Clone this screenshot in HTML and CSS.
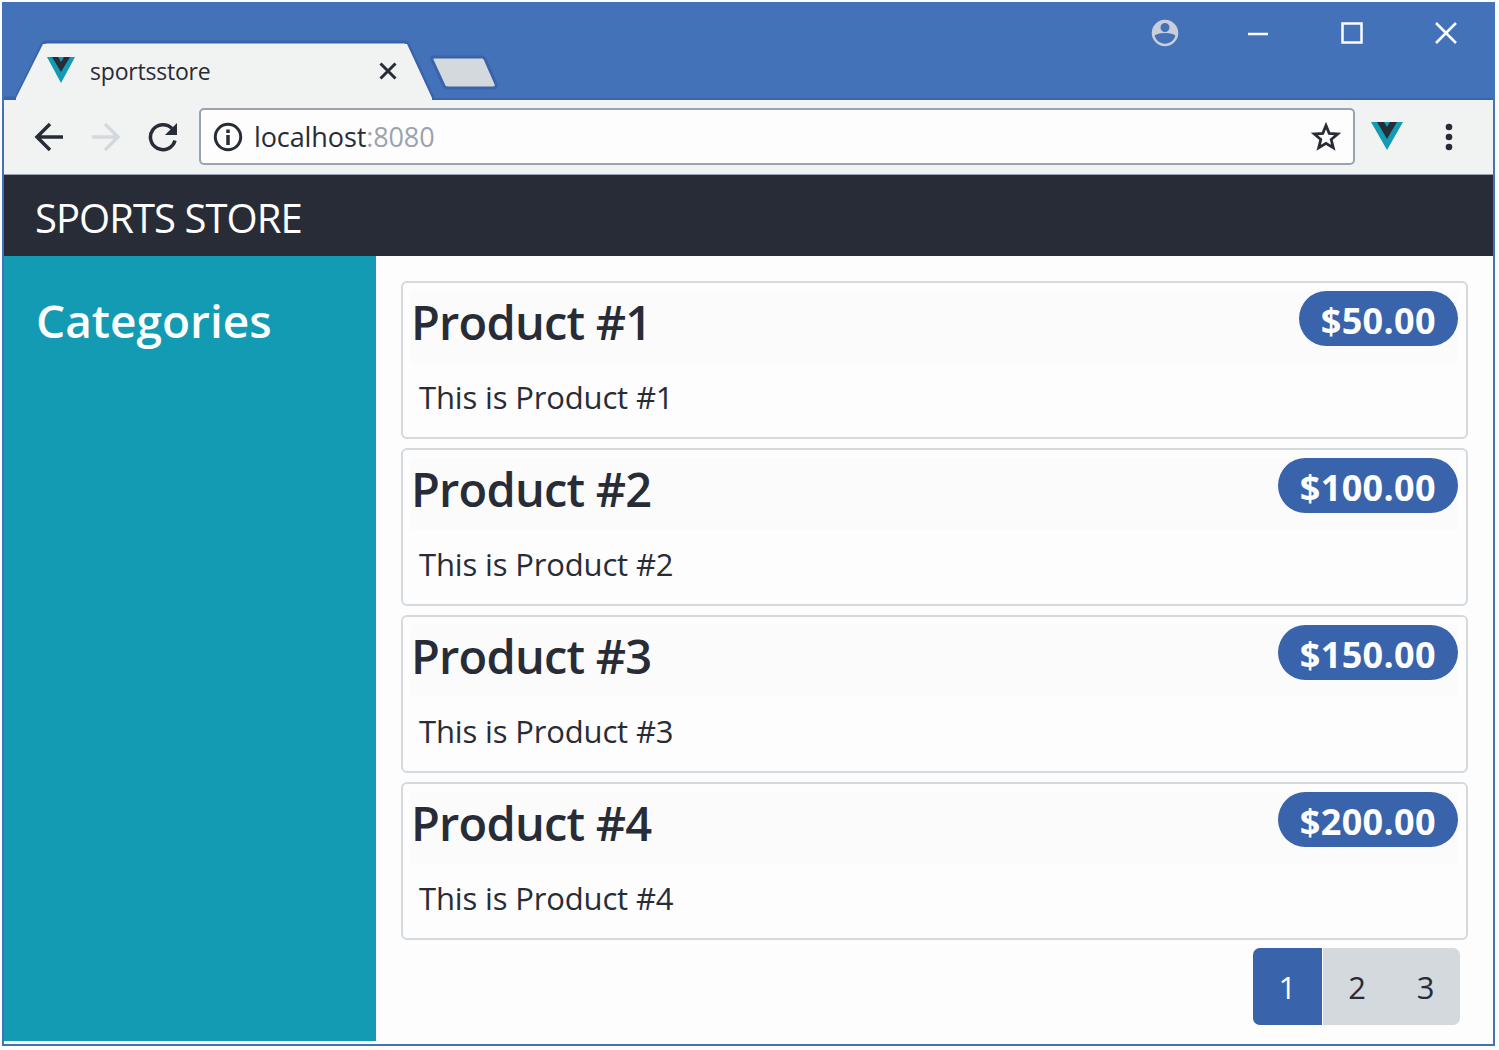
FILE: index.html
```html
<!DOCTYPE html>
<html lang="en">
<head>
<meta charset="utf-8">
<title>sportsstore</title>
<link rel="stylesheet" href="styles.css">
</head>
<body>
<div class="window">
  <div class="titlebar">
    <div class="tab">
      <svg class="tab-shape" width="424" height="60" viewBox="0 0 424 60"><path d="M0 58H12L38 5Q39.500 2 43 2H400Q403 2 404.500 5L429 58" fill="#f1f3f3" stroke="#3963ab" stroke-width="3"/><path d="M12 58L39 4H403L428 58V60H12Z" fill="#f1f3f3"/></svg>
      <svg class="tab-logo" width="28" height="26" viewBox="0 0 28 26"><path d="M0 0H28L14 26Z" fill="#129bb3"/><path d="M5 0H11L14 5L17 0H23L14 15Z" fill="#272c36"/></svg>
      <span class="tab-title">sportsstore</span>
      <svg class="tab-close" width="18" height="18" viewBox="0 0 18 18"><path d="M1.500 1.500L16.500 16.500M16.500 1.500L1.500 16.500" stroke="#272c36" stroke-width="3"/></svg>
    </div>
    <svg class="new-tab" width="68" height="36" viewBox="0 0 68 36"><path d="M2 2H52Q54 2 55 4L66 29Q67 33 63 33H18Q15 33 14 31L2 5Z" fill="#d4d9dd" stroke="#3963ab" stroke-width="3"/></svg>
    <div class="controls">
      <svg width="28" height="28" viewBox="0 0 28 28"><circle cx="14" cy="14" r="12" fill="none" stroke="#c8cfd9" stroke-width="2.500"/><path fill-rule="evenodd" d="M14 1A13 13 0 0 0 2 18Q5 14 14 14Q23 14 26 18A13 13 0 0 0 14 1ZM14 4A4.500 4.500 0 1 1 14 13A4.500 4.500 0 1 1 14 4Z" fill="#c8cfd9"/></svg>
      <svg width="22" height="28" viewBox="0 0 22 28"><path d="M1 15H21" stroke="#fdfdfd" stroke-width="2.500"/></svg>
      <svg width="22" height="28" viewBox="0 0 22 28"><rect x="1.500" y="4.500" width="19" height="19" fill="none" stroke="#fdfdfd" stroke-width="2.500"/></svg>
      <svg width="22" height="28" viewBox="0 0 22 28"><path d="M1 4L21 24M21 4L1 24" stroke="#fdfdfd" stroke-width="2.500"/></svg>
    </div>
  </div>
  <div class="toolbar">
    <div class="nav">
      <svg width="30" height="30" viewBox="0 0 30 30"><path d="M29 15H3M16 2L3 15L16 28" fill="none" stroke="#272c36" stroke-width="3.500"/></svg>
      <svg width="30" height="30" viewBox="0 0 30 30"><path d="M1 15H27M14 2L27 15L14 28" fill="none" stroke="#d4d9dd" stroke-width="3.500"/></svg>
      <svg width="30" height="30" viewBox="0 0 30 30"><path d="M27 18.500A12.500 12.500 0 1 1 24 6.500" fill="none" stroke="#272c36" stroke-width="3.500"/><path d="M29 1V13H17Z" fill="#272c36"/></svg>
    </div>
    <div class="address">
      <svg class="info" width="30" height="30" viewBox="0 0 30 30"><circle cx="15" cy="15" r="12.700" fill="none" stroke="#272c36" stroke-width="3"/><path d="M15 13V23M15 7.500V11" stroke="#272c36" stroke-width="3.500"/></svg>
      <span class="url">localhost<span class="port">:8080</span></span>
      <svg class="star" width="30" height="30" viewBox="0 0 30 30"><path d="M15 3.500L18.200 11.400L26.700 12L20.200 17.500L22.300 25.800L15 21.300L7.700 25.800L9.800 17.500L3.300 12L11.800 11.400Z" fill="none" stroke="#272c36" stroke-width="2.800"/></svg>
    </div>
    <svg class="extension" width="32" height="28" viewBox="0 0 32 28"><path d="M0 0H32L16 28Z" fill="#129bb3"/><path d="M6 0H13L16 5L19 0H26L16 17Z" fill="#272c36"/></svg>
    <svg class="menu" width="8" height="28" viewBox="0 0 8 28"><g fill="#272c36"><circle cx="4" cy="4" r="3.300"/><circle cx="4" cy="14" r="3.300"/><circle cx="4" cy="24" r="3.300"/></g></svg>
  </div>
  <header class="brand"><span>SPORTS STORE</span></header>
  <div class="page">
    <aside class="sidebar"><h2>Categories</h2></aside>
    <main class="products">
      <article class="card"><div class="card-head"><h3>Product #1</h3><span class="price">$50.00</span></div><p>This is Product #1</p></article>
      <article class="card"><div class="card-head"><h3>Product #2</h3><span class="price">$100.00</span></div><p>This is Product #2</p></article>
      <article class="card"><div class="card-head"><h3>Product #3</h3><span class="price">$150.00</span></div><p>This is Product #3</p></article>
      <article class="card"><div class="card-head"><h3>Product #4</h3><span class="price">$200.00</span></div><p>This is Product #4</p></article>
      <nav class="pagination"><span class="active">1</span><span>2</span><span>3</span></nav>
    </main>
  </div>
</div>
</body>
</html>
```
FILE: styles.css
```css
* { box-sizing: border-box; }
body {
  margin: 0;
  padding: 2px 3px 3px 2px;
  height: 1050px;
  background: #fdfdfd;
  color: #272c36;
  font-family: "Open Sans", "Noto Sans", sans-serif;
}
h2, h3, p { margin: 0; }
svg { display: block; flex: none; }
.window {
  display: flex;
  flex-direction: column;
  width: 1493px;
  height: 1044px;
  border: 2px solid #4472b8;
  border-top: 0;
  background: #fdfdfd;
}
.titlebar {
  display: flex;
  align-items: flex-end;
  height: 98px;
  background: #4472b8;
  border-bottom: 2px solid #3963ab;
}
.tab {
  position: relative;
  display: flex;
  align-items: center;
  width: 424px;
  height: 60px;
  margin-bottom: -2px;
  padding: 2px 0 0 43px;
}
.tab-shape { position: absolute; left: 0; top: 0; overflow: visible; }
.tab-logo, .tab-title, .tab-close { position: relative; }
.tab-logo { margin-bottom: 2px; }
.tab-title { width: 289px; margin-left: 15px; font-size: 23px; letter-spacing: -0.2px; line-height: 30px; }
.new-tab { margin: 0 0 7px 2px; }
.controls {
  display: flex;
  gap: 72px;
  align-self: flex-start;
  margin: 17px 36px 0 auto;
}
.controls svg:first-child { margin-right: -4px; }
.toolbar {
  display: flex;
  align-items: center;
  height: 75px;
  padding: 0 40px 1px 30px;
  background: #f1f3f3;
  border-bottom: 1px solid #9aa2b0;
}
.nav { display: flex; gap: 27px; width: 165px; }
.address {
  display: flex;
  align-items: center;
  width: 1156px;
  height: 57px;
  padding: 0 12px;
  background: #fdfdfd;
  border: 2px solid #9aa2b0;
  border-radius: 5px;
}
.url { flex: 1; margin-left: 11px; font-size: 27px; letter-spacing: -0.1px; line-height: 40px; }
.port { color: #9aa2b0; }
.extension { margin-left: 16px; margin-bottom: 1px; }
.menu { margin-left: auto; }
.brand {
  height: 81px;
  padding: 15px 31px 0;
  background: #272c36;
  color: #fdfdfd;
  font-size: 40px;
  letter-spacing: -0.95px;
  line-height: 56px;
}
.page { display: flex; height: 785px; }
.sidebar {
  width: 372px;
  padding: 31px 32px;
  background: #129bb3;
  color: #fdfdfd;
}
.sidebar h2 { font-size: 46px; font-weight: 600; line-height: 66px; }
.products {
  display: flex;
  flex-direction: column;
  gap: 9px;
  flex: 1;
  padding: 25px 25px 0;
}
.card {
  height: 158px;
  padding: 8px;
  border: 2px solid #d4d9dd;
  border-radius: 6px;
}
.card-head {
  display: flex;
  justify-content: space-between;
  height: 72px;
  background: #fbfbfb;
}
.card h3 { font-size: 47px; font-weight: 600; letter-spacing: -0.8px; line-height: 62px; }
.price {
  height: 55px;
  padding: 0 22px;
  border-radius: 28px;
  background: #3963ab;
  color: #fdfdfd;
  font-size: 36px;
  font-weight: 700;
  letter-spacing: 0.35px;
  line-height: 59px;
}
.card p { padding: 11px 8px; font-size: 31px; letter-spacing: -0.15px; line-height: 46px; }
.pagination {
  display: flex;
  align-self: flex-end;
  width: 207px;
  height: 77px;
  margin: -1px 8px 0 0;
  border-radius: 7px;
  overflow: hidden;
  background: #d4d9dd;
}
.pagination span { flex: 1; text-align: center; font-size: 31px; line-height: 78px; }
.pagination .active { background: #3963ab; color: #fdfdfd; border-right: 1px solid #fdfdfd; }
```
